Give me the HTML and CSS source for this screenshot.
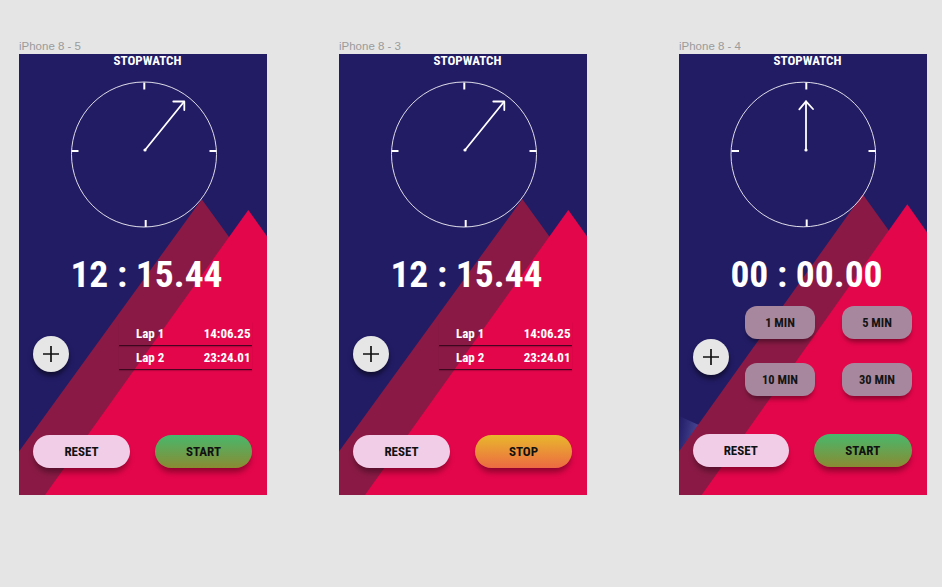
FILE: index.html
```html
<!DOCTYPE html>
<html>
<head>
<meta charset="utf-8">
<title>Stopwatch</title>
<link rel="stylesheet" href="styles.css">
</head>
<body>
<div class="board">
  <section class="artboard">
    <div class="label">iPhone 8 - 5</div>
    <div class="phone">
      <svg class="bg" width="248" height="441" viewBox="0 0 248 441">
        <polygon class="tri-back" points="182.7,145.3 -31.6,441 397,441"/>
        <polygon class="tri-front" points="229.3,156 26,441 432.6,441"/>
      </svg>
      <div class="content">
        <div class="title">STOPWATCH</div>
        <svg class="clock" width="248" height="170" viewBox="0 0 248 170">
          <circle class="dial" cx="125" cy="86.5" r="72.5"/>
          <line class="tick" x1="125.3" y1="14.5" x2="125.3" y2="21.5"/>
          <line class="tick" x1="126.7" y1="152" x2="126.7" y2="159"/>
          <line class="tick" x1="52.5" y1="83" x2="59.5" y2="83"/>
          <line class="tick" x1="190.5" y1="83" x2="197.5" y2="83"/>
          <line class="hand" x1="126" y1="82" x2="165" y2="33.7"/>
          <polyline class="hand" points="154.3,33.5 165.3,33.5 165.3,42"/>
          <circle class="pivot" cx="126" cy="82" r="1.6"/>
        </svg>
        <div class="time">12 : 15.44</div>
        <div class="mid">
          <div class="plus"><svg width="18" height="18" viewBox="0 0 18 18"><path d="M9 1V17M1 9H17"/></svg></div>
          <div class="laps">
            <div class="lap"><span>Lap 1</span><span>14:06.25</span></div>
            <div class="lap"><span>Lap 2</span><span>23:24.01</span></div>
          </div>
        </div>
        <div class="actions">
          <div class="btn reset">RESET</div>
          <div class="btn start">START</div>
        </div>
      </div>
    </div>
  </section>

  <section class="artboard second">
    <div class="label">iPhone 8 - 3</div>
    <div class="phone">
      <svg class="bg" width="248" height="441" viewBox="0 0 248 441">
        <polygon class="tri-back" points="183.3,145 -31.6,441 397,441"/>
        <polygon class="tri-front" points="229.3,156 26,441 432.6,441"/>
      </svg>
      <div class="content">
        <div class="title">STOPWATCH</div>
        <svg class="clock" width="248" height="170" viewBox="0 0 248 170">
          <circle class="dial" cx="125" cy="86.5" r="72.5"/>
          <line class="tick" x1="125.3" y1="14.5" x2="125.3" y2="21.5"/>
          <line class="tick" x1="126.7" y1="152" x2="126.7" y2="159"/>
          <line class="tick" x1="52.5" y1="83" x2="59.5" y2="83"/>
          <line class="tick" x1="190.5" y1="83" x2="197.5" y2="83"/>
          <line class="hand" x1="126" y1="82" x2="165" y2="33.7"/>
          <polyline class="hand" points="154.3,33.5 165.3,33.5 165.3,42"/>
          <circle class="pivot" cx="126" cy="82" r="1.6"/>
        </svg>
        <div class="time">12 : 15.44</div>
        <div class="mid">
          <div class="plus"><svg width="18" height="18" viewBox="0 0 18 18"><path d="M9 1V17M1 9H17"/></svg></div>
          <div class="laps">
            <div class="lap"><span>Lap 1</span><span>14:06.25</span></div>
            <div class="lap"><span>Lap 2</span><span>23:24.01</span></div>
          </div>
        </div>
        <div class="actions">
          <div class="btn reset">RESET</div>
          <div class="btn stop">STOP</div>
        </div>
      </div>
    </div>
  </section>

  <section class="artboard third">
    <div class="label">iPhone 8 - 4</div>
    <div class="phone">
      <svg class="bg" width="248" height="441" viewBox="0 0 248 441">
        <defs>
          <linearGradient id="glow" x1="0" y1="0" x2="1" y2="0.3">
            <stop offset="0" stop-color="#4a4a9a" stop-opacity="0"/>
            <stop offset="1" stop-color="#5656a6" stop-opacity="0.85"/>
          </linearGradient>
        </defs>
        <polygon points="0,362 22,372 2,400 0,400" fill="url(#glow)"/>
        <polygon class="tri-back" points="183.7,140.3 -31,441 400,441"/>
        <polygon class="tri-front" points="228.3,150.3 22.7,441 434,441"/>
      </svg>
      <div class="content preset-mode">
        <div class="title">STOPWATCH</div>
        <svg class="clock" width="248" height="170" viewBox="0 0 248 170">
          <circle class="dial" cx="124.3" cy="86.5" r="72.3"/>
          <line class="tick" x1="127.3" y1="14.5" x2="127.3" y2="21.5"/>
          <line class="tick" x1="127.7" y1="151.5" x2="127.7" y2="158.5"/>
          <line class="tick" x1="52.5" y1="83" x2="60" y2="83"/>
          <line class="tick" x1="189.5" y1="83" x2="196.7" y2="83"/>
          <line class="hand" x1="127" y1="82" x2="127" y2="33.5"/>
          <polyline class="hand" points="120.3,41.3 127,33.3 134,41"/>
          <circle class="pivot" cx="127" cy="82" r="1.6"/>
        </svg>
        <div class="time">00 : 00.00</div>
        <div class="mid">
          <div class="plus"><svg width="18" height="18" viewBox="0 0 18 18"><path d="M9 1V17M1 9H17"/></svg></div>
          <div class="presets">
            <div class="preset">1 MIN</div>
            <div class="preset">5 MIN</div>
            <div class="preset">10 MIN</div>
            <div class="preset">30 MIN</div>
          </div>
        </div>
        <div class="actions">
          <div class="btn reset">RESET</div>
          <div class="btn start">START</div>
        </div>
      </div>
    </div>
  </section>
</div>
</body>
</html>
```

FILE: styles.css
```css
* { box-sizing: border-box; margin: 0; padding: 0; }

html, body { background: #e5e5e5; }

body {
  width: 942px;
  height: 587px;
  overflow: hidden;
  font-family: Roboto, "Liberation Sans", sans-serif;
}

.board {
  display: flex;
  align-items: flex-start;
  padding: 40px 0 0 19px;
}

.artboard {
  display: flex;
  flex-direction: column;
  width: 248px;
}

.artboard.second { margin-left: 72px; }
.artboard.third { margin-left: 92px; }

.label {
  height: 14px;
  line-height: 13px;
  font-family: "Liberation Sans", Arial, sans-serif;
  font-size: 11.5px;
  color: #9b9b9b;
}

.phone {
  position: relative;
  width: 248px;
  height: 441px;
  background: #221c65;
  overflow: hidden;
}

.bg {
  position: absolute;
  left: 0;
  top: 0;
  display: block;
}

.tri-back { fill: #8a1a45; }
.tri-front { fill: #e4064a; }

.content {
  position: relative;
  height: 100%;
  display: flex;
  flex-direction: column;
  padding: 0 15px 27px 14px;
}

.title {
  height: 14px;
  line-height: 14px;
  padding-left: 10px;
  text-align: center;
  color: #fff;
  font-weight: 700;
  font-size: 13px;
  font-stretch: condensed;
}

.clock {
  display: block;
  margin-left: -14px;
}

.dial {
  fill: none;
  stroke: rgba(255, 255, 255, 0.85);
  stroke-width: 1;
}

.tick {
  stroke: #fff;
  stroke-width: 2;
}

.hand {
  fill: none;
  stroke: #fff;
  stroke-width: 1.8;
  stroke-linecap: round;
  stroke-linejoin: round;
}

.pivot { fill: #fff; }

.time {
  margin-top: 18px;
  height: 37px;
  line-height: 37px;
  padding-left: 8px;
  text-align: center;
  color: #fff;
  font-weight: 700;
  font-size: 37.5px;
  font-stretch: condensed;
  white-space: nowrap;
}

.mid {
  display: flex;
  align-items: flex-start;
}

.plus {
  width: 36px;
  height: 36px;
  margin-top: 42.5px;
  border-radius: 50%;
  background: #e6e6e6;
  box-shadow: 0 4px 5px rgba(0, 0, 0, 0.5);
  display: flex;
  align-items: center;
  justify-content: center;
}

.plus path {
  stroke: #111;
  stroke-width: 1.7;
  fill: none;
}

.laps {
  margin-left: auto;
  margin-top: 29px;
  width: 133px;
}

.lap {
  display: flex;
  justify-content: space-between;
  align-items: center;
  height: 24px;
  padding: 0 1.5px 0 17px;
  border-bottom: 1.5px solid rgba(45, 5, 25, 0.85);
  box-shadow: 0 1px 1px rgba(60, 0, 30, 0.25);
  color: #fff;
  font-weight: 700;
  font-size: 13px;
  font-stretch: condensed;
}

.preset-mode .plus { margin-top: 45.7px; }

.presets {
  margin-left: auto;
  margin-top: 13px;
  display: grid;
  grid-template-columns: 70px 70px;
  column-gap: 27px;
  row-gap: 24px;
}

.preset {
  height: 33px;
  border-radius: 12px;
  background: #a7879d;
  box-shadow: 0 5px 5px -2px rgba(0, 0, 0, 0.4);
  display: flex;
  align-items: center;
  justify-content: center;
  color: #141414;
  font-weight: 700;
  font-size: 12.5px;
  font-stretch: condensed;
}

.actions {
  margin-top: auto;
  display: flex;
  justify-content: space-between;
}

.btn {
  width: 97px;
  height: 33px;
  border-radius: 17px;
  display: flex;
  align-items: center;
  justify-content: center;
  color: #111;
  font-weight: 700;
  font-size: 13px;
  font-stretch: condensed;
  box-shadow: 0 6px 6px -2px rgba(0, 0, 0, 0.4);
}

.reset { background: #f1cde8; }
.start { background: linear-gradient(180deg, #47b86d 0%, #8a8b32 100%); }
.stop { background: linear-gradient(180deg, #e8b82c 0%, #ec6a42 100%); }

.preset-mode { padding-bottom: 28.5px; }
.preset-mode .reset { width: 96px; margin-left: -0.3px; }
.preset-mode .start { width: 98.5px; }
```
